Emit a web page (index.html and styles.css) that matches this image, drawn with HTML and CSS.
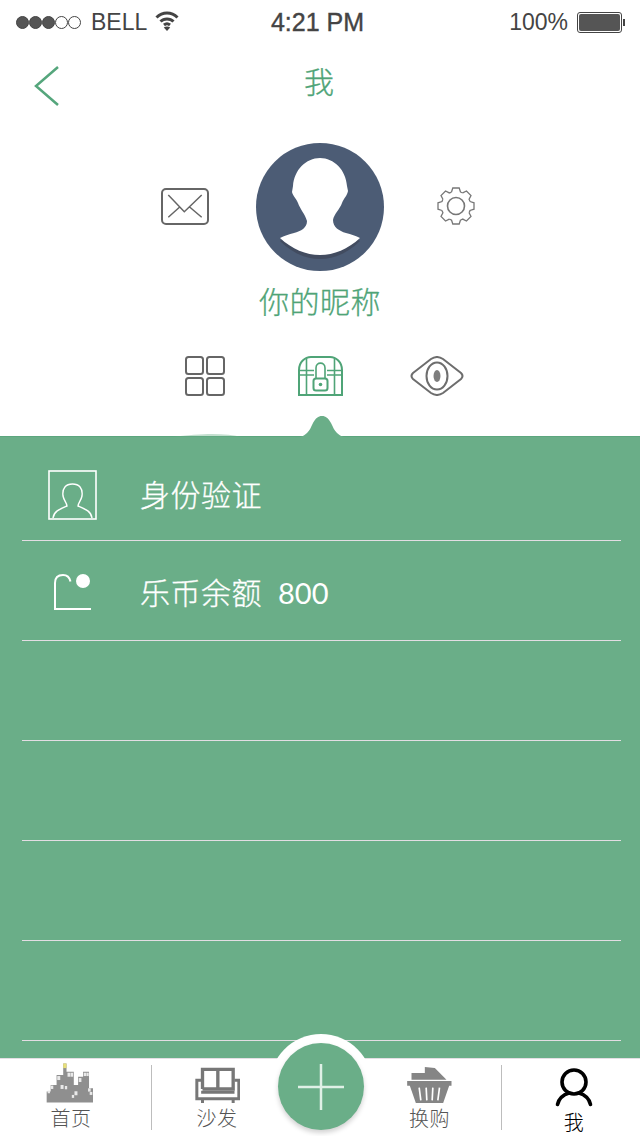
FILE: index.html
```html
<!DOCTYPE html>
<html lang="zh-CN">

<head>
    <meta charset="UTF-8">
    <meta name="viewport" content="width=device-width, initial-scale=1.0">
    <title>我</title>
    <link rel="stylesheet" href="styles.css">
</head>

<body>
    <div class="status-bar">
        <div class="status-left">
            <span class="signal">
                <i class="dot on"></i><i class="dot on"></i><i class="dot on"></i><i class="dot"></i><i class="dot"></i>
            </span>
            <span class="carrier">BELL</span>
            <svg class="wifi" width="24" height="22" viewBox="0 0 24 22" fill="none" stroke="#444" stroke-width="3">
                <path d="M1.5 7.5C7.5 1.5 16.5 1.5 22.5 7.5" />
                <path d="M5.5 11.5C9 8 15 8 18.5 11.5" />
                <path d="M9 15C10.800 13.500 13.200 13.500 15 15" />
                <path d="M12 21L8.800 17.500C10.800 16 13.200 16 15.200 17.500Z" fill="#444" stroke="none" />
            </svg>
        </div>
        <div class="status-time">4:21 PM</div>
        <div class="status-right">
            <span class="percent">100%</span>
            <span class="battery"><i class="battery-fill"></i></span>
            <span class="battery-tip"></span>
        </div>
    </div>

    <div class="nav-bar">
        <svg class="back" width="26" height="42" viewBox="0 0 26 42" fill="none" stroke="#55a67c" stroke-width="2.500">
            <path d="M24 2L2 21L24 40" />
        </svg>
        <h1 class="nav-title">我</h1>
    </div>

    <div class="profile">
        <svg class="mail" width="48" height="37" viewBox="0 0 48 37" fill="none" stroke="#666" stroke-width="2">
            <rect x="1" y="1" width="46" height="35" rx="4" />
            <path d="M7.300 7L23.300 23.700L40.700 7M7.300 29.300L19 18.700M28.300 18.700L40.700 29.300" stroke-width="1.500" />
        </svg>
        <svg class="avatar" width="128" height="128" viewBox="0 0 128 128">
            <circle cx="64" cy="64" r="64" fill="#4c5c75" />
            <path fill="#424c60" d="M24 98C36 110 50 116 64 116C78 116 92 110 104 98L90 90H38Z" />
            <path fill="#fff" d="M64 15C78 15 90 27 91 43L92 48C91 53 88 55 86 60C84 66 78 71 77 77C77 84 83 88 90 90C95 91 100 93 104 95C92 106 78 112 64 112C50 112 36 106 24 95C28 93 33 91 38 90C45 88 51 85 51 78C49 71 44 66 42 60C40 55 37 53 36 49L37 43C38 27 50 15 64 15Z" />
        </svg>
        <svg class="gear" width="38" height="38" viewBox="0 0 38 38" fill="none" stroke="#777" stroke-width="1.300">
            <defs>
                <path id="tooth" d="M14.500 5L15.800 1H22.200L23.500 5A14.700 14.700 0 0 1 25.720 5.930" />
            </defs>
            <use href="#tooth" />
            <use href="#tooth" transform="rotate(45 19 19)" />
            <use href="#tooth" transform="rotate(90 19 19)" />
            <use href="#tooth" transform="rotate(135 19 19)" />
            <use href="#tooth" transform="rotate(180 19 19)" />
            <use href="#tooth" transform="rotate(225 19 19)" />
            <use href="#tooth" transform="rotate(270 19 19)" />
            <use href="#tooth" transform="rotate(315 19 19)" />
            <circle cx="19" cy="19" r="8.500" stroke-width="1.600" />
        </svg>
    </div>

    <div class="nickname">你的昵称</div>

    <div class="section-tabs">
        <svg width="40" height="40" viewBox="0 0 40 40" fill="none" stroke="#666" stroke-width="2">
            <rect x="1" y="1" width="17" height="17" rx="2.500" />
            <rect x="22" y="1" width="17" height="17" rx="2.500" />
            <rect x="1" y="22" width="17" height="17" rx="2.500" />
            <rect x="22" y="22" width="17" height="17" rx="2.500" />
        </svg>
        <svg class="chest" width="45" height="40" viewBox="0 0 45 40" fill="none" stroke="#4fa477" stroke-width="1.600">
            <path d="M1 39V14C1 6 7 1 13 1H32C38 1 44 6 44 14V39Z" stroke-width="2" />
            <path d="M8.500 2V39M36.500 2V39M1 14.500H16M29 14.500H44M1 19H16M29 19H44" />
            <path d="M18 22.500V12C18 5.500 27 5.500 27 12V22.500" />
            <rect x="15.500" y="22.500" width="14" height="12" rx="2.500" stroke-width="2" />
            <circle cx="22.500" cy="28.500" r="1.800" fill="#4fa477" stroke="none" />
        </svg>
        <svg width="54" height="40" viewBox="0 0 54 40" fill="none" stroke="#6d6d6d" stroke-width="2">
            <path d="M3 17L21 3Q27 -1 33 3L51 17Q54 20 51 23L33 37Q27 41 21 37L3 23Q0 20 3 17Z" />
            <ellipse cx="27" cy="20" rx="10.500" ry="13.500" />
            <ellipse cx="27" cy="20" rx="3.500" ry="6" fill="#7d7d7d" stroke="none" />
        </svg>
    </div>

    <div class="panel">
        <svg class="panel-ripple" width="70" height="3" viewBox="0 0 70 3">
            <path fill="#6aae88" opacity="0.4" d="M0 3C15 1 30 0 40 0C52 0 62 1 70 3Z" />
        </svg>
        <svg class="panel-bump" width="60" height="23" viewBox="0 0 60 23">
            <path fill="#6aae88" d="M0 23C6 23 11 22 15 18C18 15 19 12 21 8C24 3 26 1 30 1C34 1 36 3 39 8C41 12 42 15 45 18C49 22 54 23 60 23Z" />
        </svg>
        <div class="row row-first">
            <span class="row-icon">
                <svg width="49" height="50" viewBox="0 0 49 50" fill="none" stroke="#fff">
                    <rect x="1" y="1" width="47" height="48" stroke-width="1.600" />
                    <path d="M5 48C6 41 12 39 19 36C19 33 16 31 15 26C14 18 18 14 24.500 14C31 14 35 18 34 26C33 31 30 33 30 36C37 39 43 41 44 48" stroke-width="1.400" />
                </svg>
            </span>
            <span class="row-text">身份验证</span>
        </div>
        <div class="row">
            <span class="row-icon coin">
                <svg width="38" height="37" viewBox="0 0 38 37" fill="none" stroke="#fff" stroke-width="2">
                    <path d="M16.500 7.500C15.500 3 12.500 1 9 1C4 1 1 4 1 9V35H37" />
                    <circle cx="29" cy="7" r="7" fill="#fff" stroke="none" />
                </svg>
            </span>
            <span class="row-text">乐币余额</span>
            <span class="row-value">800</span>
        </div>
        <div class="row"></div>
        <div class="row"></div>
        <div class="row"></div>
        <div class="row"></div>
    </div>

    <div class="tab-bar">
        <div class="tab tab-home">
            <svg width="47" height="40" viewBox="138 99 142 120">
                <path fill="#8f8f8f" d="M140 218V185H152V165H170V135H190V100H200V125H222V165H235V140H250V125H268V175H280V218Z" />
                <rect x="190" y="100" width="10" height="14" fill="#e8e07a" />
                <g fill="#e9e9e9">
                    <rect x="172" y="138" width="9" height="12" />
                    <rect x="203" y="128" width="8" height="12" />
                    <rect x="212" y="128" width="8" height="12" />
                    <rect x="182" y="165" width="9" height="12" />
                    <rect x="195" y="168" width="7" height="10" />
                    <rect x="152" y="167" width="8" height="10" />
                    <rect x="143" y="182" width="7" height="8" />
                    <rect x="224" y="184" width="9" height="12" />
                    <rect x="216" y="195" width="7" height="9" />
                    <rect x="237" y="144" width="8" height="12" />
                    <rect x="252" y="128" width="7" height="10" />
                    <rect x="260" y="128" width="7" height="10" />
                    <rect x="265" y="175" width="8" height="10" />
                    <rect x="270" y="186" width="8" height="9" />
                </g>
            </svg>
            <span>首页</span>
        </div>
        <i class="tab-divider"></i>
        <div class="tab tab-sofa">
            <svg width="45" height="36" viewBox="582 112 134 108" fill="none" stroke="#777">
                <path d="M604 178V119H696V178H604M650 119V178" stroke-width="10" />
                <path d="M600 152H587V207H713V152H700M600 188H700" stroke-width="9" />
                <path d="M604 208V220M696 208V220" stroke-width="9" />
            </svg>
            <span>沙发</span>
        </div>
        <div class="fab-gap"></div>
        <div class="tab tab-shop">
            <svg width="45" height="36" viewBox="262 112 134 108">
                <path fill="#858585" d="M275 150V130H315V112L345 115L380 150Z" />
                <path fill="#858585" d="M262 154H395V168H388L370 220H288L270 168H262Z" />
                <path stroke="#fff" stroke-width="5" fill="none" d="M298 174L303 212M319 174L321 212M339 174L337 212M359 174L354 212" />
            </svg>
            <span>换购</span>
        </div>
        <i class="tab-divider"></i>
        <div class="tab tab-me">
            <svg width="38" height="40" viewBox="0 0 38 40" fill="none" stroke="#000" stroke-width="3.600" stroke-linecap="round">
                <circle cx="19" cy="15" r="12" />
                <path d="M2.500 37.500C4 31 9 27.500 14 26M35.500 37.500C34 31 29 27.500 24 26" />
            </svg>
            <span>我</span>
        </div>
        <div class="fab">
            <svg width="46" height="46" viewBox="0 0 46 46" stroke="#dff0e6" stroke-width="2.500">
                <path d="M23 0V46M0 23H46" />
            </svg>
        </div>
    </div>
</body>

</html>
```

FILE: styles.css
```css
body {
    font-family: "Noto Sans CJK SC", "Liberation Sans", sans-serif;
    margin: 0;
    padding: 0;
    width: 640px;
    height: 1136px;
    overflow: hidden;
    background-color: #ffffff;
    display: flex;
    flex-direction: column;
}

/* Status bar */

.status-bar {
    height: 44px;
    padding: 0 15px 0 16px;
    display: grid;
    grid-template-columns: 1fr auto 1fr;
    align-items: center;
    font-family: "Liberation Sans", sans-serif;
    color: #444;
    flex-shrink: 0;
}

.status-left,
.status-right {
    display: flex;
    align-items: center;
}

.status-right {
    justify-content: flex-end;
}

.signal {
    display: flex;
    gap: 0;
}

.dot {
    width: 11px;
    height: 11px;
    border: 1px solid #444;
    border-radius: 50%;
}

.dot.on {
    background-color: #555;
}

.carrier {
    font-size: 23px;
    margin-left: 10px;
}

.wifi {
    margin-left: 8px;
    margin-top: -2px;
}

.status-time {
    font-size: 25px;
    -webkit-text-stroke: 0.4px #444;
    margin-right: 6px;
}

.percent {
    font-size: 23px;
    margin-right: 9px;
}

.battery {
    width: 45px;
    height: 21px;
    border: 1px solid #444;
    border-radius: 3px;
    padding: 1px;
    box-sizing: border-box;
    display: flex;
}

.battery-fill {
    flex: 1;
    background-color: #555;
    border-radius: 2px;
}

.battery-tip {
    width: 2px;
    height: 7px;
    margin-left: 1px;
    background-color: #444;
}

/* Nav */

.nav-bar {
    height: 76px;
    padding-left: 34px;
    display: grid;
    grid-template-columns: 1fr auto 1fr;
    align-items: center;
    flex-shrink: 0;
}

.nav-title {
    margin: -4px 36px 0 0;
    font-size: 30px;
    font-weight: 300;
    line-height: 40px;
    color: #4fa477;
    -webkit-text-stroke: 0.3px #4fa477;
}

.back {
    margin-top: 8px;
}

/* Profile */

.profile {
    margin-top: 23px;
    padding-right: 4px;
    display: flex;
    align-items: center;
    justify-content: center;
    flex-shrink: 0;
}

.mail {
    margin-right: 47px;
    margin-bottom: 2px;
}

.gear {
    margin-left: 53px;
    margin-bottom: 2px;
}

.nickname {
    margin-top: 8px;
    text-align: center;
    font-size: 30px;
    font-weight: 300;
    letter-spacing: 0.5px;
    line-height: 42px;
    color: #4fa477;
    -webkit-text-stroke: 0.3px #4fa477;
}

.section-tabs {
    margin-top: 35px;
    padding-left: 9px;
    display: flex;
    justify-content: center;
    flex-shrink: 0;
}

.section-tabs svg {
    display: block;
}

.chest {
    margin: 0 67px 0 73px;
}

/* Green panel */

.panel {
    position: relative;
    margin-top: 40px;
    flex: 1;
    min-height: 0;
    background-color: #6aae88;
    border-top: 1px solid #5ca67e;
    padding: 0 19px 0 22px;
}

.panel-bump {
    position: absolute;
    left: 292px;
    top: -22px;
    display: block;
}

.panel-ripple {
    position: absolute;
    left: 172px;
    top: -3px;
    display: block;
}

.row {
    height: 99px;
    border-bottom: 1px solid #e3dde3;
    display: flex;
    align-items: center;
    color: #ffffff;
}

.row-first {
    height: 94px;
    padding-top: 9px;
}

.row-icon {
    width: 118px;
    margin-top: 4px;
    padding-left: 26px;
    box-sizing: border-box;
    flex-shrink: 0;
    display: flex;
}

.row-icon.coin {
    padding-left: 32px;
}

.row-text {
    font-size: 30px;
    font-weight: 300;
    letter-spacing: 0.5px;
    -webkit-text-stroke: 0.3px #ffffff;
}

.row-value {
    font-family: Lato, sans-serif;
    font-size: 29px;
    margin: 4px 0 0 16px;
}

/* Tab bar */

.tab-bar {
    position: relative;
    height: 78px;
    background-color: #ffffff;
    border-top: 1px solid #e4dfe4;
    box-sizing: border-box;
    display: flex;
    flex-shrink: 0;
}

.tab {
    display: flex;
    flex-direction: column;
    align-items: center;
    padding-top: 4px;
    color: #555;
    font-size: 20px;
    font-weight: 300;
    letter-spacing: 0.5px;
    line-height: 24px;
}

.tab svg {
    display: block;
    flex-shrink: 0;
}

.tab span {
    margin-top: 3px;
}

.tab-home {
    width: 142px;
    padding-right: 9px;
}

.tab-home svg {
    margin-left: -4px;
}

.tab-sofa {
    width: 130px;
    padding-top: 8px;
}

.fab-gap {
    width: 76px;
}

.tab-shop {
    width: 143px;
    padding-top: 8px;
}

.tab-me {
    width: 132px;
    padding-left: 6px;
    padding-top: 8px;
    color: #000;
}

.tab-divider {
    width: 1px;
    height: 65px;
    margin-top: 6px;
    background-color: #bdbdbd;
}

.fab {
    position: absolute;
    left: 278px;
    top: -16px;
    width: 86px;
    height: 87px;
    border-radius: 50%;
    background-color: #6aae88;
    box-shadow: 0 3px 5px rgba(0, 0, 0, 0.18), 0 0 0 9px #ffffff;
    display: flex;
    align-items: center;
    justify-content: center;
}
```
